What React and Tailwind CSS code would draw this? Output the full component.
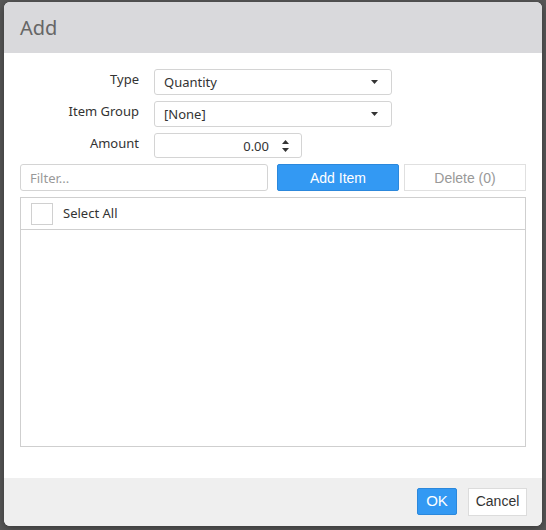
import React, { useState } from "react";

const Caret = ({ up }) => (
  <svg width="7" height="4" viewBox="0 0 7 4" className="block">
    <path d={up ? "M0 4 L3.5 0 L7 4 Z" : "M0 0 L7 0 L3.5 4 Z"} fill="#333" />
  </svg>
);

const SelectBox = ({ value }) => (
  <div className="w-[238px] h-[26px] border border-[#d4d4d4] rounded-[3px] bg-white flex items-center justify-between pl-[9px] pr-[13px] text-[13px] text-[#333]">
    <span className="pt-[2px]">{value}</span>
    <Caret />
  </div>
);

const FormRow = ({ label, children }) => (
  <div className="flex items-start">
    <div className="w-[119px] text-right text-[13px] text-[#333] leading-[20px]">
      {label}
    </div>
    <div className="ml-[15px]">{children}</div>
  </div>
);

const App = () => {
  const [checked, setChecked] = useState(false);
  const [filter, setFilter] = useState("");

  return (
    <div
      className="w-[546px] h-[530px] bg-[#585858] pt-[2px] pl-[4px] overflow-hidden"
      style={{ fontFamily: '"Noto Sans", "Open Sans", sans-serif' }}
    >
      <div className="w-[538px] h-[524px] bg-white rounded-[6px] overflow-hidden flex flex-col shadow-[0_2px_8px_rgba(0,0,0,0.4)]">
        <div className="h-[51px] bg-[#d9d9dc] flex items-center px-4 shrink-0">
          <span className="text-[20px] text-[#666] leading-none">Add</span>
        </div>

        <div className="flex-1 px-4 pt-4 flex flex-col gap-[6px]">
          <FormRow label="Type">
            <SelectBox value="Quantity" />
          </FormRow>
          <FormRow label="Item Group">
            <SelectBox value="[None]" />
          </FormRow>
          <FormRow label="Amount">
            <div className="w-[148px] h-[25px] border border-[#d4d4d4] rounded-[3px] bg-white flex items-center text-[13px] text-[#333]">
              <span className="flex-1 text-right pr-[13px] pt-[2px]">0.00</span>
              <div className="flex flex-col gap-[4px] pr-[12px]">
                <Caret up />
                <Caret />
              </div>
            </div>
          </FormRow>

          <div className="flex items-center">
            <input
              value={filter}
              onChange={(e) => setFilter(e.target.value)}
              placeholder="Filter..."
              className="w-[248px] h-[27px] border border-[#d4d4d4] rounded-[3px] px-[9px] pt-[1px] text-[13px] text-[#333] placeholder:text-[#999] outline-none"
            />
            <button
              className="ml-[9px] w-[122px] h-[27px] pt-[1px] bg-[#3399f3] border border-[#2b88dc] rounded-[2px] text-white text-[14px]"
              style={{ fontFamily: '"Liberation Sans", Arial, sans-serif' }}
            >
              Add Item
            </button>
            <button
              className="ml-[5px] w-[122px] h-[27px] pt-[1px] bg-white border border-[#e0e0e0] text-[#999] text-[14px]"
              style={{ fontFamily: '"Liberation Sans", Arial, sans-serif' }}
            >
              Delete (0)
            </button>
          </div>

          <div className="w-[506px] h-[250px] border border-[#cfcfcf] flex flex-col">
            <div className="h-[32px] border-b border-[#cfcfcf] flex items-center pl-[10px]">
              <button
                onClick={() => setChecked(!checked)}
                className="w-[22px] h-[22px] border border-[#d0d0d0] bg-white"
              />
              <span className="ml-[10px] text-[13px] text-[#333]">Select All</span>
            </div>
          </div>
        </div>

        <div className="h-[48px] bg-[#efefef] flex items-center justify-end pr-[15px] gap-[11px] shrink-0 pb-[1px]">
          <button
            className="w-[40px] h-[27px] bg-[#3399f3] border border-[#2b88dc] rounded-[2px] text-white text-[15px]"
            style={{ fontFamily: '"Liberation Sans", Arial, sans-serif' }}
          >
            OK
          </button>
          <button
            className="w-[59px] h-[28px] bg-white border border-[#dcdcdc] text-[#333] text-[14px]"
            style={{ fontFamily: '"Liberation Sans", Arial, sans-serif' }}
          >
            Cancel
          </button>
        </div>
      </div>
    </div>
  );
};

export default App;
